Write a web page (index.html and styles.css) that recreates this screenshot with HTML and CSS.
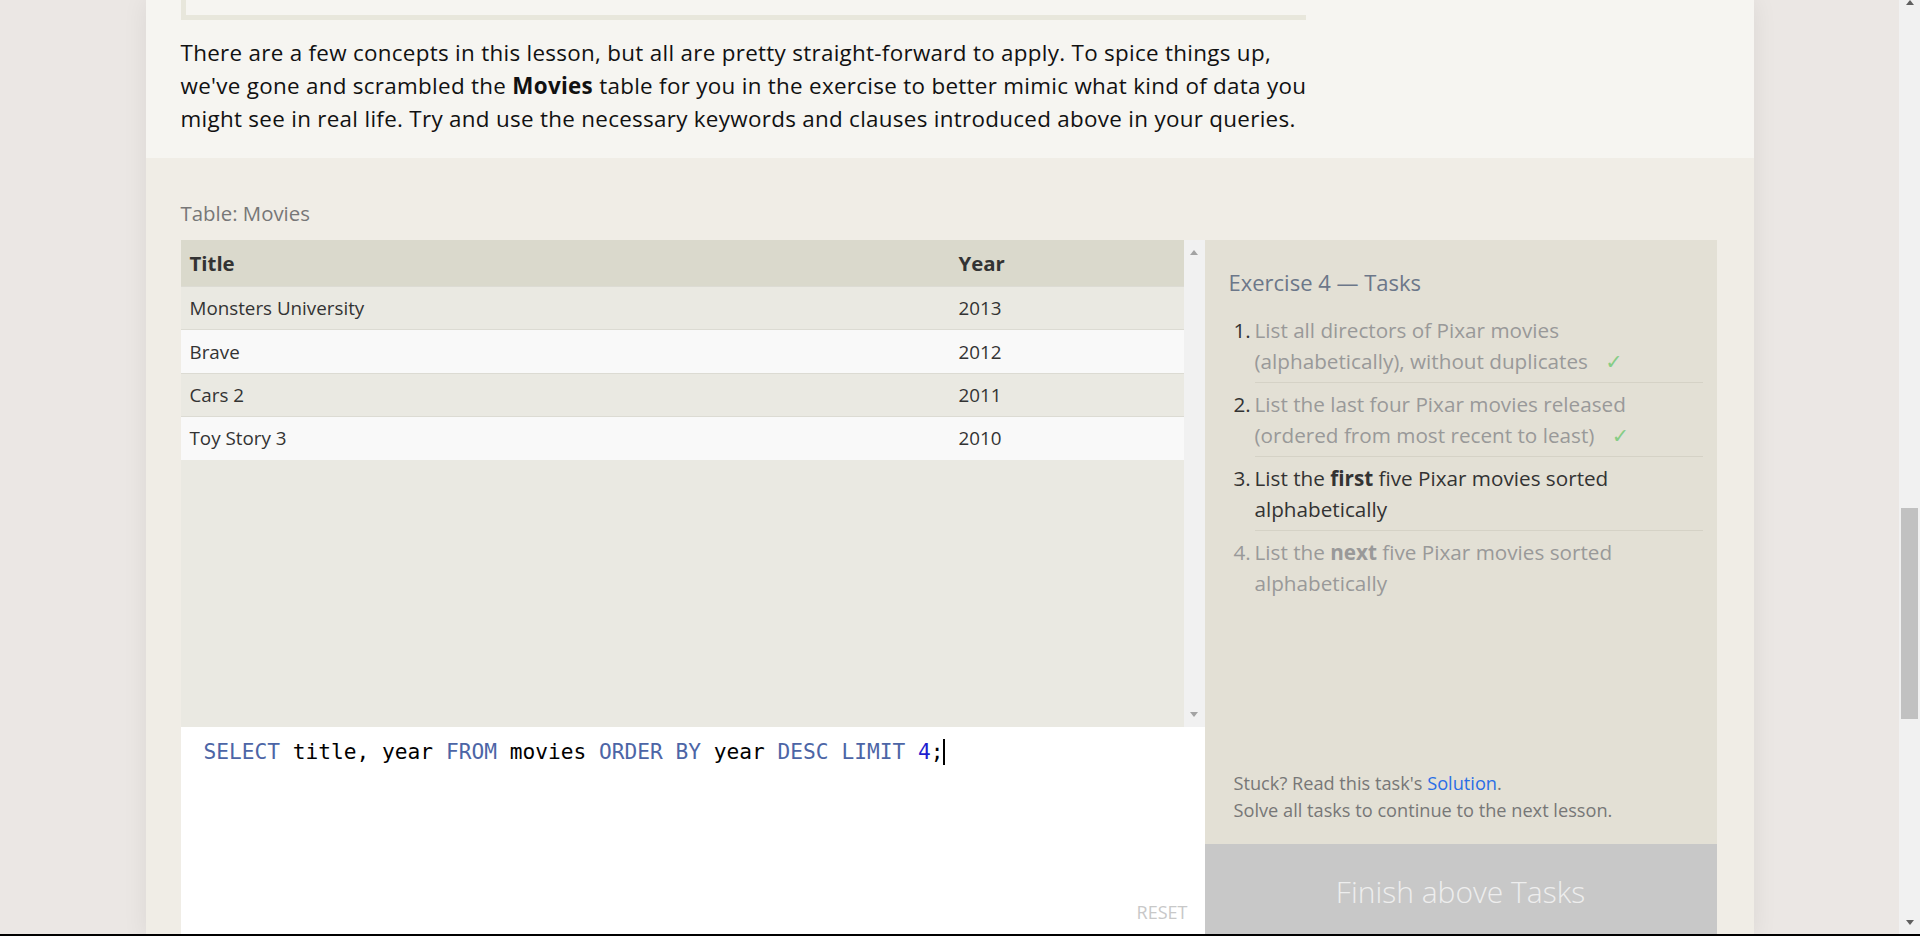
FILE: index.html
```html
<!DOCTYPE html>
<html lang="en">
<head>
<meta charset="utf-8">
<title>SQL Lesson 4: Filtering and sorting Query results</title>
<link rel="stylesheet" href="styles.css">
</head>
<body>
<div class="screen">
  <div class="viewport">
    <div class="column">
      <section class="lesson">
        <div class="codeblock"></div>
        <p class="lead">There are a few concepts in this lesson, but all are pretty straight-forward to apply. To spice things up, we've gone and scrambled the <strong>Movies</strong> table for you in the exercise to better mimic what kind of data you might see in real life. Try and use the necessary keywords and clauses introduced above in your queries.</p>
      </section>
      <section class="exercise">
        <div class="table-label">Table: Movies</div>
        <div class="workspace">
          <div class="left">
            <div class="result">
              <div class="result-body">
                <table class="movies">
                  <colgroup><col class="col-title"><col></colgroup>
                  <thead><tr><th>Title</th><th>Year</th></tr></thead>
                  <tbody>
                    <tr><td>Monsters University</td><td>2013</td></tr>
                    <tr><td>Brave</td><td>2012</td></tr>
                    <tr><td>Cars 2</td><td>2011</td></tr>
                    <tr><td>Toy Story 3</td><td>2010</td></tr>
                  </tbody>
                </table>
              </div>
              <div class="vscroll"><span class="arrow up"></span><span class="arrow down"></span></div>
            </div>
            <div class="editor">
              <div class="code"><span class="kw">SELECT</span> title, year <span class="kw">FROM</span> movies <span class="kw">ORDER BY</span> year <span class="kw">DESC</span> <span class="kw">LIMIT</span> <span class="num-lit">4</span>;<span class="cursor"></span></div>
              <div class="reset">RESET</div>
            </div>
          </div>
          <aside class="tasks">
            <h3 class="tasks-title">Exercise 4 — Tasks</h3>
            <ol class="task-list">
              <li class="task done"><span class="task-num">1.</span><span class="task-body">List all directors of Pixar movies (alphabetically), without duplicates <span class="check">✓</span></span></li>
              <li class="task done"><span class="task-num">2.</span><span class="task-body">List the last four Pixar movies released (ordered from most recent to least) <span class="check">✓</span></span></li>
              <li class="task current"><span class="task-num">3.</span><span class="task-body">List the <strong>first</strong> five Pixar movies sorted alphabetically</span></li>
              <li class="task todo"><span class="task-num">4.</span><span class="task-body">List the <strong>next</strong> five Pixar movies sorted alphabetically</span></li>
            </ol>
            <div class="help">
              <div>Stuck? Read this task's <a class="link" href="#">Solution</a>.</div>
              <div>Solve all tasks to continue to the next lesson.</div>
            </div>
            <div class="finish">Finish above Tasks</div>
          </aside>
        </div>
      </section>
    </div>
  </div>
  <div class="page-scroll">
    <span class="arrow up small"></span>
    <span class="thumb"></span>
    <span class="arrow down small"></span>
  </div>
</div>
<div class="bottom-edge"></div>
</body>
</html>
```
FILE: styles.css
```css
html, body {
  margin: 0;
  padding: 0;
}
body {
  font-family: "Open Sans", "Liberation Sans", sans-serif;
  color: #111;
  overflow: hidden;
}
.screen {
  display: flex;
  height: 934px;
}
.viewport {
  width: 1899px;
  overflow: hidden;
  background: #ebe7e4;
}
.column {
  width: 1608px;
  margin: 0 auto;
  box-shadow: 0 0 24px rgba(0, 0, 0, 0.07);
}
.lesson {
  background: #f6f5f1;
  padding: 0 35px 23px 35px;
}
.codeblock {
  width: 1125px;
  height: 20px;
  box-sizing: border-box;
  border-left: 5px solid #e8e7dc;
  border-bottom: 5px solid #e8e7dc;
}
.lead {
  margin: 16px 0 0;
  width: 1140px;
  font-size: 22.4px;
  letter-spacing: 0.3px;
  line-height: 33px;
  color: #111;
}
.lead strong {
  font-weight: 700;
}
.exercise {
  background: #f0ede6;
  padding: 41px 36px 0 35px;
}
.table-label {
  font-size: 20.4px;
  line-height: 28px;
  color: #777;
  margin-bottom: 13px;
}
.workspace {
  display: grid;
  grid-template-columns: 1024px 512px;
}
.left {
  display: flex;
  flex-direction: column;
}
.result {
  display: flex;
  height: 487px;
  background: #eae9e2;
}
.result-body {
  flex: 1;
}
.movies {
  width: 100%;
  border-collapse: collapse;
}
.col-title {
  width: 769px;
}
.movies th {
  background: #dad9cc;
  height: 46px;
  padding: 0 9px;
  text-align: left;
  font-size: 20.4px;
  font-weight: 700;
  color: #333;
}
.movies td {
  height: 42.4px;
  padding: 0 9px;
  font-size: 18.8px;
  color: #333;
  border-top: 1px solid #dcdbd3;
}
.movies tbody tr:nth-child(odd) td {
  background: #eae9e2;
}
.movies tbody tr:nth-child(even) td {
  background: #f9f9f9;
}
.vscroll {
  width: 21px;
  background: #f1f1f1;
  display: flex;
  flex-direction: column;
  justify-content: space-between;
  align-items: center;
  padding: 10px 0;
  box-sizing: border-box;
}
.arrow {
  display: block;
  width: 0;
  height: 0;
  border-left: 4.5px solid transparent;
  border-right: 4.5px solid transparent;
}
.arrow.up {
  border-bottom: 5px solid #a3a3a3;
}
.arrow.down {
  border-top: 5px solid #a3a3a3;
}
.editor {
  background: #fff;
  height: 212px;
  box-sizing: border-box;
  padding: 12px 17px 15px 23px;
  display: flex;
  flex-direction: column;
}
.code {
  font-family: "DejaVu Sans Mono", "Liberation Mono", monospace;
  font-size: 21.2px;
  line-height: 26px;
  color: #000;
  white-space: pre;
}
.kw {
  color: #4c65a6;
}
.num-lit {
  color: #1d1dcf;
}
.cursor {
  display: inline-block;
  width: 0;
  height: 26px;
  border-left: 2px solid #000;
  vertical-align: top;
}
.reset {
  margin-top: auto;
  align-self: flex-end;
  font-size: 18px;
  line-height: 24px;
  color: #c8c8c8;
}
.tasks {
  background: #e3e0d5;
  height: 699px;
  box-sizing: border-box;
  padding-top: 27px;
  display: flex;
  flex-direction: column;
}
.tasks-title {
  margin: 0 0 12px 24px;
  font-size: 22px;
  font-weight: 400;
  line-height: 30px;
  color: #6c7789;
}
.task-list {
  list-style: none;
  margin: 0 14px 0 29px;
  padding: 0;
}
.task {
  display: flex;
  font-size: 20.7px;
  line-height: 30.5px;
  color: #999;
}
.task-num {
  flex: none;
  width: 21px;
  padding-top: 6px;
  color: #333;
}
.task.todo .task-num {
  color: #999;
}
.task-body {
  flex: 1;
  padding: 6px 0;
  border-bottom: 1px solid #d5d2c6;
}
.task:last-child .task-body {
  border-bottom: none;
}
.task.current .task-body {
  color: #333;
}
.task strong {
  font-weight: 700;
}
.check {
  font-family: "DejaVu Sans", sans-serif;
  line-height: 0;
  color: #86cd86;
  margin-left: 12px;
}
.help {
  margin: auto 0 20px 29px;
  font-size: 18.2px;
  line-height: 27px;
  color: #777;
}
.link {
  color: #2a6ee6;
  text-decoration: none;
}
.finish {
  height: 95px;
  flex: none;
  background: #c8c8c8;
  display: flex;
  align-items: center;
  justify-content: center;
  font-size: 30px;
  font-weight: 300;
  color: #eeeeee;
}
.page-scroll {
  width: 21px;
  background: #f1f1f1;
  display: flex;
  flex-direction: column;
  align-items: center;
}
.page-scroll .arrow.up {
  margin-top: 0;
  border-bottom-color: #606060;
}
.page-scroll .thumb {
  display: block;
  width: 17px;
  height: 211px;
  margin-top: 503px;
  background: #c1c1c1;
}
.page-scroll .arrow.down {
  margin-top: auto;
  margin-bottom: 9px;
  border-top-color: #606060;
}
.bottom-edge {
  height: 2px;
  background: #000;
}
```
